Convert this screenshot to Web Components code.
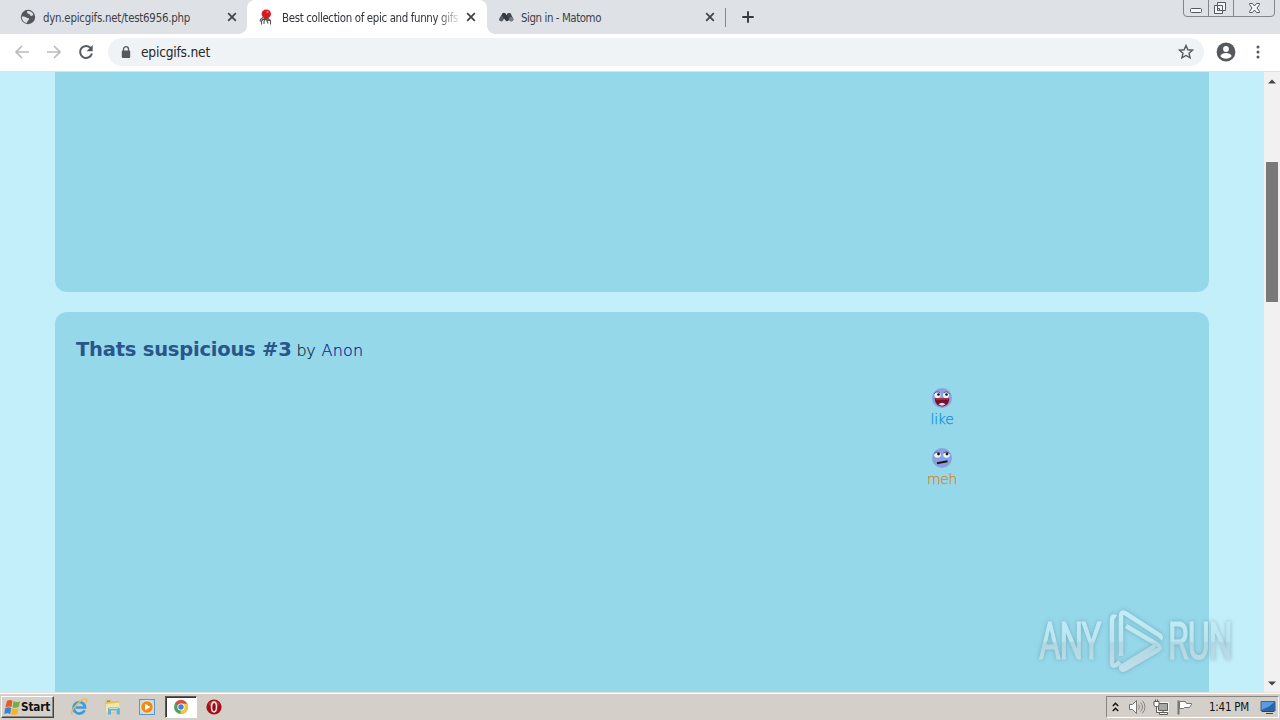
<!DOCTYPE html>
<html lang="en"><head><meta charset="utf-8"><title>Best collection of epic and funny gifs</title>
<style>html,body{margin:0;height:100%;overflow:hidden}body{font-family:"DejaVu Sans Condensed","DejaVu Sans",sans-serif}</style></head>
<body><desktop-screen></desktop-screen>
<script>
const define=(name,css,html,ready)=>customElements.define(name,class extends HTMLElement{
  connectedCallback(){
    if(this.shadowRoot)return;
    this.attachShadow({mode:'open'}).innerHTML=`<style>:host{display:block;box-sizing:border-box}*{box-sizing:border-box}svg{display:block;flex:none}${css}</style>`+(typeof html==='function'?html(this):html);
    if(ready)ready(this);
  }
});

/* Text whose tracking is adjusted to a given advance width. */
define('fit-text',`:host{display:block;flex:none;white-space:pre}span{display:inline-block}`,
  e=>`<span>${e.getAttribute('text')}</span>`,
  e=>{const w=+e.getAttribute('w'),s=e.shadowRoot.querySelector('span'),n=s.textContent.length;
    e.style.width=w+'px';s.style.letterSpacing=((w-s.getBoundingClientRect().width)/n)+'px';});

const icons={
globe:`<svg width="16" height="16" viewBox="0 0 16 16"><circle cx="8" cy="8" r="7.200" fill="#54585d"/><path d="M1.800 7.500c1.500-.3 3.500 0 4.800 1.100 1 .9 2.300.2 2.400 1.500.1 1.400-1.800 1.600-2.100 3.900C4.200 14 1.500 10.700 1.800 7.500zM7.200 2c2.500-.5 5.500 1 6.300 4-1 .4-2 1.200-3 .8-.9-.4-.1-1.700-1.500-1.800C7.700 4.900 6.500 3.500 7.200 2z" fill="#dee1e6"/></svg>`,
octo:`<svg width="16" height="16" viewBox="0 0 16 16"><path d="M4.500 8 1.500 10.500l-.5 2M6 9 2.500 12v3.500M7 9.500 5 12.500V15M7.500 10.500l1.500 4M9 9.500l2.500 2v4M3 10.500h4M8 11.500h3.500" fill="none" stroke="#4d5a53" stroke-width="1.100"/><path d="M5.500 8h4v2.700h-4z" fill="#8f3436"/><ellipse cx="7.300" cy="4.900" rx="4.700" ry="4.500" fill="#d51b20"/><circle cx="8.500" cy="3" r="1.200" fill="#ef6664"/></svg>`,
matomo:`<svg width="16" height="16" viewBox="0 0 16 16"><path d="M3.200 10.300 6 6" stroke="#555d65" stroke-width="4.300" stroke-linecap="round"/><path d="m6 6 3 4.200L11.200 6" stroke="#33393f" stroke-width="4" stroke-linecap="round" stroke-linejoin="round" fill="none"/><path d="m11 6 2.300 4.200" stroke="#42494f" stroke-width="4" stroke-linecap="round"/><circle cx="13.200" cy="10.200" r="2.300" fill="#777d84"/></svg>`,
close:`<svg width="10" height="10" viewBox="0 0 10 10"><path d="m1.200 1.200 7.600 7.600m0-7.600L1.200 8.800" stroke="#414549" stroke-width="1.800"/></svg>`,
plus:`<svg width="12" height="12" viewBox="0 0 12 12"><path d="M6 .3v11.400M.3 6h11.400" stroke="#35393d" stroke-width="1.900"/></svg>`,
back:`<svg width="16" height="14" viewBox="0 0 16 14"><path d="M15 7H2M8 1 2 7l6 6" fill="none" stroke="#b9bbbd" stroke-width="1.700"/></svg>`,
fwd:`<svg width="16" height="14" viewBox="0 0 16 14"><path d="M1 7h13M8 1l6 6-6 6" fill="none" stroke="#b9bbbd" stroke-width="1.700"/></svg>`,
reload:`<svg width="16" height="16" viewBox="0 0 16 16"><path d="M12.800 4.200A6 6 0 1 0 13.900 9.500" fill="none" stroke="#55585d" stroke-width="2"/><path d="M14.700 1v6.200H8.500z" fill="#55585d"/></svg>`,
lock:`<svg width="10" height="13" viewBox="0 0 10 13"><path d="M2.500 5.500V3.200a2.500 2.500 0 0 1 5 0v2.300" fill="none" stroke="#55585d" stroke-width="1.300"/><rect x=".8" y="4.600" width="8.400" height="7.400" rx="1" fill="#55585d"/></svg>`,
star:`<svg width="16" height="16" viewBox="0 0 16 16"><path d="m8 1.500 1.850 4.300 4.700.4L11 9.300l1.100 4.600L8 11.500l-4.100 2.400L5 9.300 1.450 6.200l4.700-.4z" fill="none" stroke="#55585d" stroke-width="1.400"/></svg>`,
user:`<svg width="20" height="20" viewBox="0 0 20 20"><circle cx="10" cy="10" r="9.400" fill="#55585d"/><circle cx="10" cy="7" r="2.900" fill="#fff"/><path d="M4.300 14c1.500-4 9.900-4 11.400 0-2.300 3.600-9 3.600-11.400 0z" fill="#fff"/></svg>`,
dots:`<svg width="4" height="14" viewBox="0 0 4 14"><g fill="#55585d"><circle cx="2" cy="2" r="1.500"/><circle cx="2" cy="7" r="1.500"/><circle cx="2" cy="12" r="1.500"/></g></svg>`,
controls:`<svg width="94" height="18" viewBox="0 0 94 18"><path d="M1.500 0v13q0 3.500 3.500 3.500h84q3.500 0 3.500-3.500V0M26.500 0v16M51.500 0v16" fill="none" stroke="#83878d"/><g fill="#f5f6f8" stroke="#555a61"><rect x="8.500" y="8.500" width="11" height="4" rx="1"/><path d="M35.500 2.500h8v8h-8zM32.500 5.500h8v8h-8zM35.500 8.500h2v2h-2z"/><path d="M67.500 3.500h3l2 2.500 2-2.500h3v1L75 8l2.500 3.500v1h-3l-2-2.500-2 2.500h-3v-1L70 8l-2.500-3.500z"/></g></svg>`,
like:`<svg width="22" height="22" viewBox="0 0 22 22"><circle cx="11" cy="11" r="10" fill="#8ba0dd"/><circle cx="6.500" cy="8" r="3.100" fill="#eef4fa"/><circle cx="15" cy="8" r="3.100" fill="#eef4fa"/><path d="M3 7q2.500-3.600 6-1M12.500 6q3.500-2.600 6 1" fill="none" stroke="#374163" stroke-width=".8"/><circle cx="7.500" cy="7.500" r="1.300" fill="#151824"/><circle cx="15.500" cy="7.500" r="1.300" fill="#151824"/><path d="M3.800 11.200h14.400c.2 4.800-2.700 8.200-7 8.200s-7.600-3.300-7.400-8.200z" fill="#761329"/><path d="M7.500 17.300q3.500-3 7 0-3.500 2.800-7 0z" fill="#e2e2ee"/><path d="M5 12h12" stroke="#c63447" stroke-width="1.200"/></svg>`,
meh:`<svg width="22" height="22" viewBox="0 0 22 22"><circle cx="11" cy="11" r="10" fill="#8ba0dd"/><ellipse cx="6.500" cy="8" rx="3.300" ry="2.700" fill="#eef4fa"/><ellipse cx="15.500" cy="8" rx="3.300" ry="2.700" fill="#eef4fa"/><path d="M3 6.500q3-3 6 0M12.500 6q3-2.600 6 .5" fill="none" stroke="#39435d" stroke-width=".8"/><circle cx="7.500" cy="7" r="1.400" fill="#171a22"/><circle cx="16" cy="7" r="1.400" fill="#171a22"/><path d="m6 16.200 10.500-2" stroke="#141924" stroke-width="1.900"/></svg>`,
windows:`<svg width="17" height="17" viewBox="0 0 17 17"><path d="M3 2q3-1.700 5.500-.2L7.500 8Q4.500 6.800 1.500 8z" fill="#e65a28"/><path d="M9.500 2.300q3 1.500 6.500.1L14.700 8q-3 1.500-6.200.2z" fill="#75ae42"/><path d="M1.300 9q3-1.500 6-.1L6.200 15Q3.500 13.500.2 15z" fill="#3d83ce"/><path d="M8.300 9.300q3 1.500 6.200 0L13.300 15q-3 1.800-6.100.2z" fill="#f4b527"/></svg>`,
ie:`<svg width="18" height="18" viewBox="0 0 18 18"><path d="M14.500 12.200A5.700 5.700 0 1 1 15 9.500H5.500" fill="none" stroke="#3c9ddd" stroke-width="2.700"/><path d="M6 8q3-4 6.500-.4" fill="none" stroke="#9bd6f4"/><path d="M2 16.500C-.5 13 12-1 16.300 1.300q1.300 1-.3 3.500" fill="none" stroke="#e7bd4d" stroke-width="1.400"/></svg>`,
folder:`<svg width="18" height="18" viewBox="0 0 18 18"><path d="m1 3 5-1.500 2 1.700 7-.2 1 11-14 1z" fill="#e3c369"/><path d="m2 6 13-1.300 1 8-14 2z" fill="#f5e6a4"/><path d="M3 3.500 6 3" stroke="#62aa62" stroke-width="1.500"/><path d="M4 16.500V11q0-1.500 1.500-1.500H14q1.800 0 1.800 1.500v5.500h-3v-4H7v4z" fill="#5eb2df"/><path d="M5 10.500h9" stroke="#b8e2f2"/></svg>`,
player:`<svg width="18" height="18" viewBox="0 0 18 18"><rect x="1.500" y="1.500" width="15" height="15" fill="#bddbf0" stroke="#5998cc"/><circle cx="9" cy="9" r="6.300" fill="#f08919" stroke="#fff2d3"/><path d="m7 5.700 5.500 3.300L7 12.300z" fill="#fff"/></svg>`,
chrome:`<svg width="16" height="16" viewBox="0 0 16 16"><circle cx="8" cy="8" r="7" fill="#4ba45a"/><path d="M8 8 2 4.400A7 7 0 0 1 14.100 4.700H8z" fill="#dc4b3e"/><path d="M8 8 8 4.700h6.100A7 7 0 0 1 7.500 15z" fill="#f4c63d"/><circle cx="8" cy="8" r="3.600" fill="#fff"/><circle cx="8" cy="8" r="2.700" fill="#467edb"/></svg>`,
opera:`<svg width="16" height="16" viewBox="0 0 16 16"><circle cx="8" cy="8" r="7.600" fill="#a40e18"/><path d="M2 5Q8-2 14 5q-2 3-6 3T2 5z" fill="#c8424a" opacity=".65"/><ellipse cx="8" cy="8" rx="2.500" ry="4.900" fill="#8e0d14" stroke="#f3dddd" stroke-width="1.600"/></svg>`,
chev:`<svg width="7" height="10" viewBox="0 0 7 10"><path d="m.8 4 2.700-2.700L6.200 4M.8 9l2.700-2.700L6.200 9" fill="none" stroke="#111" stroke-width="1.500"/></svg>`,
sound:`<svg width="18" height="16" viewBox="0 0 18 16"><path d="M1.500 5.500h3l4-4v13l-4-4h-3z" fill="#fafafa" stroke="#77736d"/><path d="M10.500 5.500q2 2.500 0 5M12.500 3.500q4 4.500 0 9M14.500 1.800q5 6.200 0 12.400" fill="none" stroke="#8b8780"/></svg>`,
network:`<svg width="18" height="17" viewBox="0 0 18 17"><path d="M4.500 3.500h11v9h-11z" fill="#a6a49f" stroke="#f7f7f4"/><path d="M5.500 4.500h9v7h-9z" fill="#aaa8a3" stroke="#5d5b57"/><path d="M1 2.500h5v4l-1.500 1h-2L1 6.500zM2.500.5v2M4.500.5v2M3.500 7.500v6h3M10 12v2" stroke="#5d5b57" fill="#fff"/><path d="M6.500 13.500h8v2h-8z" stroke="#5d5b57" fill="#fff"/></svg>`,
flag:`<svg width="18" height="17" viewBox="0 0 18 17"><path d="M2.500 1.500v14" stroke="#77736d" stroke-width="2"/><path d="M3.500 2.500h6l1 2h5v1l-2 3h-5l-1 1h-4z" fill="#fff" stroke="#77736d"/></svg>`,
monitor:`<svg width="16" height="14" viewBox="0 0 16 14"><path d="M1 1.500h14V11H1z" fill="#2566b4" stroke="#48647e"/><path d="M1.500 2h12.800L9 6.500 1.500 10z" fill="#5b9be1"/><path d="M2 11.500h12M6 13.500h7" stroke="#284769"/></svg>`,
up:`<svg width="8" height="5" viewBox="0 0 8 5"><path d="M0 4.500 4 .5l4 4z" fill="#444"/></svg>`,
down:`<svg width="8" height="5" viewBox="0 0 8 5"><path d="m0 .5 4 4 4-4z" fill="#444"/></svg>`
};
define('ui-icon',`:host{display:block;flex:none}`,e=>icons[e.getAttribute('name')]);

define('browser-tab',`:host{position:relative;display:flex;align-items:center;width:240px;height:34px;padding:0 10px 0 13px;font-size:11.400px;color:#3d4146}
:host([active]){background:#fff;border-radius:8px 8px 0 0;color:#303438;padding:0 11px 0 12px}
:host([icon=matomo]){padding:0 12px 0 11px}
:host([active])::before,:host([active])::after{content:"";position:absolute;bottom:0;width:8px;height:8px}
:host([active])::before{left:-8px;background:radial-gradient(circle at 0 0,#dee1e6 7.500px,#fff 8px)}
:host([active])::after{right:-8px;background:radial-gradient(circle at 100% 0,#dee1e6 7.500px,#fff 8px)}
.t{margin-left:7px;flex:1;overflow:hidden;line-height:18px;padding-top:1px}:host([active]) .t{-webkit-mask-image:linear-gradient(90deg,#000 calc(100% - 29px),transparent calc(100% - 4px))}`,
e=>`<ui-icon name="${e.getAttribute('icon')}"></ui-icon><div class="t"><fit-text text="${e.getAttribute('text')}" w="${e.getAttribute('w')}"></fit-text></div><ui-icon name="close"></ui-icon>`);

define('tab-strip',`:host{display:flex;height:34px;background:#dee1e6;padding-left:7px}.sep{width:1px;height:19px;background:#84888d;margin:8px 16px 0 -2px}.plus{margin-top:11px}.c{margin-left:auto;margin-right:4px}`,
`<browser-tab icon="globe" text="dyn.epicgifs.net/test6956.php" w="147"></browser-tab><browser-tab active icon="octo" text="Best collection of epic and funny gifs" w="176"></browser-tab><browser-tab icon="matomo" text="Sign in - Matomo" w="80"></browser-tab><div class="sep"></div><ui-icon class="plus" name="plus"></ui-icon><ui-icon class="c" name="controls"></ui-icon>`);

define('address-bar',`:host{display:flex;align-items:center;height:38px;background:#fff;border-bottom:1px solid #dfe2e4;padding:0 20px 1px 14px}
.r{margin:0 14px 0 16px}.f{margin-left:16px}.u{margin-left:12px}.d{margin-left:20px}
.box{display:flex;align-items:center;flex:1;height:28px;border-radius:14px;background:#f0f3f6;padding:0 10px 0 13px;font-size:13.700px;color:#25282c}.url{margin-left:10px;flex:1}`,
`<ui-icon name="back"></ui-icon><ui-icon class="f" name="fwd"></ui-icon><ui-icon class="r" name="reload"></ui-icon><div class="box"><ui-icon name="lock"></ui-icon><div class="url"><fit-text text="epicgifs.net" w="69"></fit-text></div><ui-icon name="star"></ui-icon></div><ui-icon class="u" name="user"></ui-icon><ui-icon class="d" name="dots"></ui-icon>`);

define('vote-button',`:host{display:flex;flex-direction:column;align-items:center;width:40px;height:60px;font:14px/18px "DejaVu Sans",sans-serif;font-weight:200;-webkit-text-stroke:.25px currentColor}fit-text{margin-top:1px}`,
e=>`<ui-icon name="${e.getAttribute('kind')}"></ui-icon><fit-text text="${e.getAttribute('kind')}" w="${e.getAttribute('w')}"></fit-text>`);

define('gif-card',`:host{background:#95d8ea;border-radius:12px;font-family:"DejaVu Sans",sans-serif}`,`<slot></slot>`);

define('page-content',`:host{flex:1;background:#c3effa;padding:0 55px;overflow:hidden}
.one{height:220px;border-radius:0 0 12px 12px}.two{height:392px;margin-top:20px;padding:25px 21px}
.head{display:flex;align-items:baseline;height:50px;line-height:26px}.title{font-weight:bold;font-size:19.500px;color:#28568a}.by{margin-left:5px;font-size:16px;font-weight:200;color:#10232c;-webkit-text-stroke:.2px}.name{margin-left:6px;font-size:16px;font-weight:200;color:#10168c;-webkit-text-stroke:.2px}
.votes{margin-left:846px}.like{color:#0d8edc}.meh{color:#de8420}`,
`<gif-card class="one"></gif-card><gif-card class="two"><div class="head"><fit-text class="title" text="Thats suspicious #3" w="215.5"></fit-text><fit-text class="by" text="by" w="19"></fit-text><fit-text class="name" text="Anon" w="42"></fit-text></div><div class="votes"><vote-button class="like" kind="like" w="23"></vote-button><vote-button class="meh" kind="meh" w="30"></vote-button></div></gif-card>`);

define('scroll-bar',`:host{display:flex;flex-direction:column;align-items:center;width:16px;background:#f1f1f1;padding:7px 0 6px}.thumb{width:12px;height:140px;background:#797979;margin-top:78px}.down{margin-top:auto}`,
`<ui-icon name="up"></ui-icon><div class="thumb"></div><ui-icon class="down" name="down"></ui-icon>`);

define('task-bar',`:host{display:flex;align-items:center;height:28px;background:#d4cfc9;border-top:1px solid #e4e0db;box-shadow:inset 0 1px #fff;padding:1px 0 0;font-size:11.500px;color:#111}
.start{display:flex;align-items:center;width:53px;height:22px;margin-left:1px;padding-left:2px;border:1px solid;border-color:#fff #45423f #45423f #fff;box-shadow:inset -1px -1px #8b8782;font:bold 11.700px "DejaVu Sans Condensed","DejaVu Sans",sans-serif}
.quick{display:flex;align-items:center;margin-left:16px}.quick ui-icon{margin-right:16px}.quick .p{margin-right:9px}
.active{display:grid;place-items:center;width:32px;height:22px;background:#fff;border:1px solid;border-color:#5c5955 #fff #fff #5c5955;box-shadow:inset 1px 1px #3b3937;margin-right:9px}
.tray{display:flex;align-items:center;width:173px;height:22px;margin-left:auto;margin-right:1px;padding:0 2px 0 5px;border:1px solid;border-color:#8a8580 #fff #fff #8a8580}.s{margin-left:9px}.n{margin-left:7px}.fl{margin-left:5px}.time{margin-left:15px}.m{margin-left:auto}`,
`<div class="start"><ui-icon name="windows"></ui-icon><fit-text text="Start" w="29"></fit-text></div><div class="quick"><ui-icon name="ie"></ui-icon><ui-icon name="folder"></ui-icon><ui-icon class="p" name="player"></ui-icon></div><div class="active"><ui-icon name="chrome"></ui-icon></div><ui-icon name="opera"></ui-icon><div class="tray"><ui-icon name="chev"></ui-icon><ui-icon class="s" name="sound"></ui-icon><ui-icon class="n" name="network"></ui-icon><ui-icon class="fl" name="flag"></ui-icon><fit-text class="time" text="1:41 PM" w="40"></fit-text><ui-icon class="m" name="monitor"></ui-icon></div>`);

define('water-mark',`:host{position:absolute;left:1029px;top:601px;width:230px;height:82px;pointer-events:none}svg{overflow:visible;filter:drop-shadow(0 0 2px #527e8a80)}text{font:400 51px Roboto,sans-serif}`,
`<svg width="230" height="82" viewBox="0 0 230 82"><defs><linearGradient id="g" gradientUnits="userSpaceOnUse" x1="0" y1="8" x2="0" y2="72"><stop stop-color="#c2eef8"/><stop offset=".5" stop-color="#bbe6f1"/><stop offset=".53" stop-color="#b0d6e3"/><stop offset="1" stop-color="#c1e1eb"/></linearGradient><linearGradient id="t" gradientUnits="userSpaceOnUse" x1="0" y1="-50" x2="0" y2="14"><stop stop-color="#c2eef8"/><stop offset=".5" stop-color="#bbe6f1"/><stop offset=".53" stop-color="#b0d6e3"/><stop offset="1" stop-color="#c1e1eb"/></linearGradient></defs><g fill="url(#t)" stroke="url(#t)" stroke-width="1.200"><text transform="translate(10 58) scale(.65 1)" textLength="96" lengthAdjust="spacing">ANY</text><text transform="translate(139 58) scale(.66 1)" textLength="98" lengthAdjust="spacing">RUN</text></g><g fill="none" stroke="url(#g)" stroke-width="4.500" stroke-linejoin="round"><path d="M87 16q-4-2-4 3v43q0 4 4 2l4-3"/><path d="M92 55V15q0-5 4-3l34 22q3 2 1 4"/><path d="m97 25 32 19q4 3 0 5L96 68q-4 2-4-2l34-21"/></g></svg>`);

define('desktop-screen',`:host{position:relative;display:flex;flex-direction:column;width:1280px;height:720px;overflow:hidden}.view{display:flex;flex:1;min-height:0}`,
`<tab-strip></tab-strip><address-bar></address-bar><div class="view"><page-content></page-content><scroll-bar></scroll-bar></div><task-bar></task-bar><water-mark></water-mark>`);
</script></body></html>
